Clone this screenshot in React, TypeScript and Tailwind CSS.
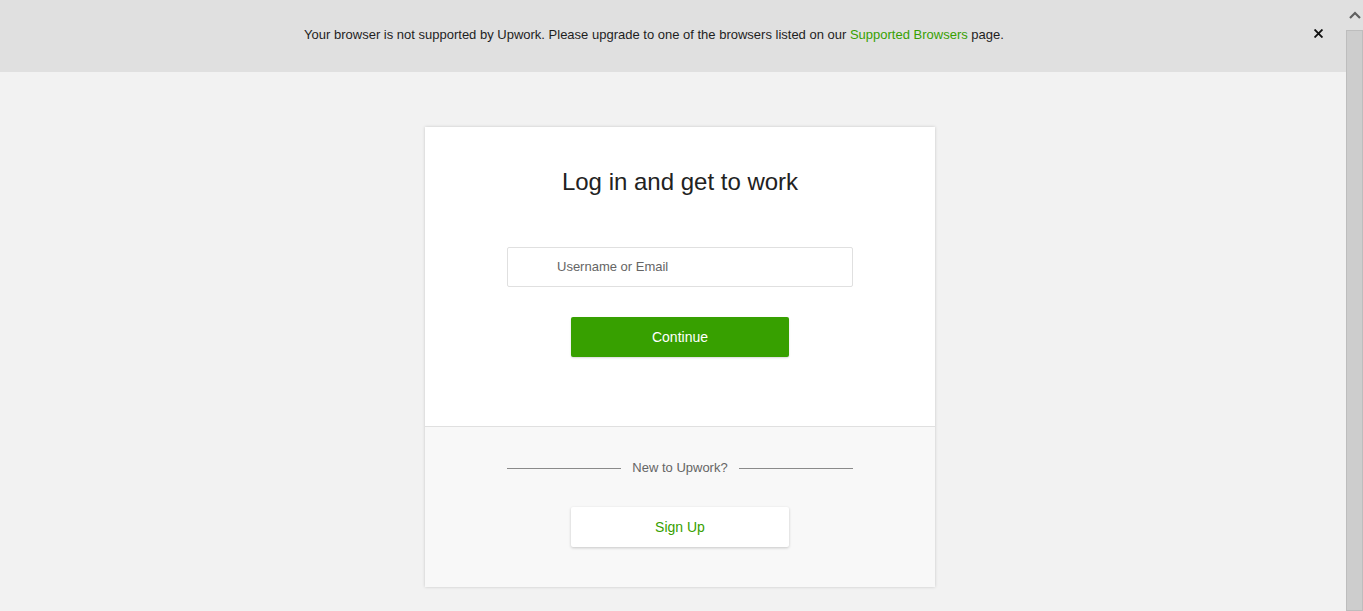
import React from "react";

export default function App() {
  return (
    <div
      className="flex h-[611px] w-full overflow-hidden bg-[#f2f2f2]"
      style={{ fontFamily: '"Liberation Sans", Arial, sans-serif' }}
    >
      <div className="flex flex-1 flex-col">
        <div className="flex h-[72px] items-center bg-[#e0e0e0] pb-[2px] pr-[38px]">
          <div className="flex-1 text-center text-[13px] text-[#1e1e1e]">
            Your browser is not supported by Upwork. Please upgrade to one of the browsers listed on our{" "}
            <span className="text-[#37a000]">Supported Browsers</span> page.
          </div>
          <div className="absolute left-[1312px] top-[27px] flex h-[12px] w-[12px] items-center justify-center">
            <svg width="9" height="9" viewBox="0 0 9 9">
              <path d="M1.2 1.2 L7.8 7.8 M7.8 1.2 L1.2 7.8" stroke="#111" strokeWidth="1.9" strokeLinecap="square" />
            </svg>
          </div>
        </div>
        <div className="flex flex-1 justify-center pl-[14px] pt-[55px]">
          <div className="flex h-[460px] w-[510px] flex-col bg-white shadow-[0_0_3px_rgba(0,0,0,0.18)]">
            <div className="flex h-[300px] flex-col items-center border-b border-[#e0e0e0]">
              <h1 className="mt-[40px] text-[24px] leading-[30px] text-[#222]">Log in and get to work</h1>
              <div className="mt-[50px] flex h-[40px] w-[346px] items-center rounded-[2px] border border-[#e0e0e0] bg-white pl-[49px] text-[13px] text-[#656565]">
                Username or Email
              </div>
              <button className="mt-[30px] flex h-[40px] w-[218px] items-center justify-center rounded-[2px] bg-[#37a000] text-[14px] text-white shadow-[0_1px_2px_rgba(0,0,0,0.15)]">
                Continue
              </button>
            </div>
            <div className="flex flex-1 flex-col items-center bg-[#f8f8f8]">
              <div className="mt-[32px] flex w-[346px] items-center">
                <div className="h-px flex-1 bg-[#8a8a8a]" />
                <span className="px-[11px] text-[13px] leading-[18px] text-[#656565]">New to Upwork?</span>
                <div className="h-px flex-1 bg-[#8a8a8a]" />
              </div>
              <button className="mt-[30px] flex h-[40px] w-[218px] items-center justify-center rounded-[2px] bg-white text-[14px] text-[#37a000] shadow-[0_1px_3px_rgba(0,0,0,0.2)]">
                Sign Up
              </button>
            </div>
          </div>
        </div>
      </div>
      <div className="flex w-[17px] flex-col bg-[#f0f0f0]">
        <div className="flex h-[30px] items-center justify-center bg-[#e0e0e0]">
          <svg width="12" height="8" viewBox="0 0 12 8">
            <path d="M1 7 L6 2 L11 7" stroke="#606060" strokeWidth="2.2" fill="none" />
          </svg>
        </div>
        <div className="flex-1 border border-[#bdbdbd] bg-[#cdcdcd]" />
      </div>
    </div>
  );
}
